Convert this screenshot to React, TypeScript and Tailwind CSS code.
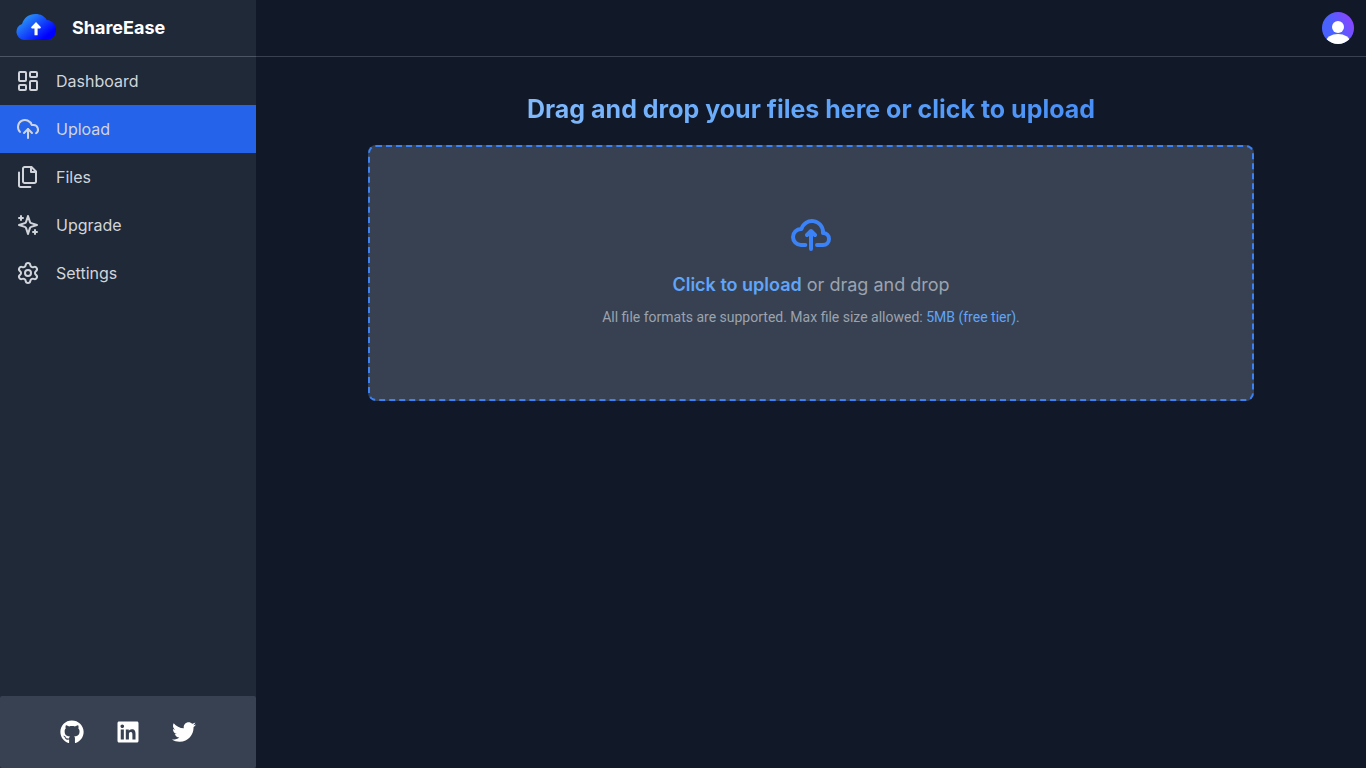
import { LayoutDashboard, Settings } from "lucide-react";
import type { ReactNode } from "react";
import { FaGithub, FaLinkedin, FaTwitter } from "react-icons/fa";

function Line({ children, className = "size-6" }: { children: ReactNode; className?: string }) {
  return (
    <svg className={className} viewBox="0 0 24 24" fill="none" stroke="currentColor" strokeWidth="2" strokeLinecap="round" strokeLinejoin="round" aria-hidden="true">
      {children}
    </svg>
  );
}

const items: { label: string; icon: ReactNode }[] = [
  { label: "Dashboard", icon: <LayoutDashboard className="size-6" aria-hidden="true" /> },
  {
    label: "Upload",
    icon: (
      <Line>
        <path d="M4 14.899A7 7 0 1 1 15.71 8h1.79a4.5 4.5 0 0 1 2.5 8.242" />
        <path d="M12 12v9" />
        <path d="m16 16-4-4-4 4" />
      </Line>
    ),
  },
  {
    label: "Files",
    icon: (
      <Line>
        <path d="M15.5 2H8.6c-.4 0-.8.2-1.1.5-.3.3-.5.7-.5 1.1v12.8c0 .4.2.8.5 1.1.3.3.7.5 1.1.5h9.8c.4 0 .8-.2 1.1-.5.3-.3.5-.7.5-1.1V6.5L15.5 2z" />
        <path d="M3 7.6v12.8c0 .4.2.8.5 1.1.3.3.7.5 1.1.5h9.8" />
        <path d="M15 2v5h5" />
      </Line>
    ),
  },
  {
    label: "Upgrade",
    icon: (
      <Line>
        <path d="m12 3-1.912 5.813a2 2 0 0 1-1.275 1.275L3 12l5.813 1.912a2 2 0 0 1 1.275 1.275L12 21l1.912-5.813a2 2 0 0 1 1.275-1.275L21 12l-5.813-1.912a2 2 0 0 1-1.275-1.275L12 3Z" />
        <path d="M5 3v4M19 17v4M3 5h4M17 19h4" />
      </Line>
    ),
  },
  { label: "Settings", icon: <Settings className="size-6" aria-hidden="true" /> },
];

function Logo() {
  return (
    <svg className="h-7 w-10" viewBox="0 0 40 28" aria-hidden="true">
      <defs>
        <linearGradient id="logo-fill" x1="8" y1="1" x2="27" y2="25" gradientUnits="userSpaceOnUse">
          <stop stopColor="#2c9cf5" />
          <stop offset="1" stopColor="#0000ff" />
        </linearGradient>
      </defs>
      <path d="M8 26A8.300 8.300 0 0 1 6 9.900C8 3.700 13 0 19.300 0C24.600 0 28.600 2.100 30.800 6C36.200 6.400 40 10.600 40 16C40 21.700 35.800 26 30.500 26Z" fill="url(#logo-fill)" />
      <path d="M20 8L25 13.200L24.200 14.400H21.600V21.200H18.500V14.400H15.800L15 13.200Z" fill="#fff" />
    </svg>
  );
}

function Avatar() {
  return (
    <svg className="size-8 rounded-full" viewBox="0 0 32 32" aria-hidden="true">
      <defs>
        <linearGradient id="avatar-fill" x1="12" y1="18" x2="30" y2="8" gradientUnits="userSpaceOnUse">
          <stop stopColor="#4962ff" />
          <stop offset="1" stopColor="#8845ff" />
        </linearGradient>
      </defs>
      <rect width="32" height="32" fill="url(#avatar-fill)" />
      <circle cx="16" cy="15" r="6" fill="#fff" />
      <ellipse cx="16" cy="30" rx="12" ry="8" fill="#fff" />
    </svg>
  );
}

export default function App() {
  return (
    <div className="flex min-h-screen bg-[#111827] font-['Inter',sans-serif]">
      <aside className="flex w-64 shrink-0 flex-col bg-[#1f2937]">
        <a href="#" className="flex h-[57px] items-center gap-4 border-b border-[#4b5563] px-4 text-lg font-bold text-white">
          <Logo />
          ShareEase
        </a>
        <nav className="flex flex-1 flex-col">
          {items.map((item) => (
            <a
              key={item.label}
              href="#"
              className={
                item.label === "Upload"
                  ? "flex h-12 items-center gap-4 bg-[#2563eb] px-4 text-[#d1d5db]"
                  : "flex h-12 items-center gap-4 px-4 text-[#d1d5db]"
              }
            >
              {item.icon}
              {item.label}
            </a>
          ))}
        </nav>
        <div className="flex h-18 items-center justify-center gap-8 rounded-xs bg-[#374151] text-white">
          <a href="#" aria-label="GitHub"><FaGithub className="size-6" /></a>
          <a href="#" aria-label="LinkedIn"><FaLinkedin className="size-6" /></a>
          <a href="#" aria-label="Twitter"><FaTwitter className="size-6" /></a>
        </div>
      </aside>
      <div className="flex min-w-0 flex-1 flex-col">
        <header className="flex h-[57px] items-center justify-end border-b border-[#374151] px-3">
          <button type="button" aria-label="Account"><Avatar /></button>
        </header>
        <main className="flex flex-col items-center px-28 pt-9">
          <h1 className="w-full bg-linear-to-r from-[#93c5fd] via-[#60a5fa] to-[#3b82f6] bg-clip-text text-center text-[25px] leading-8 font-bold text-transparent">
            Drag and drop your files here or click to upload
          </h1>
          <button type="button" className="mt-5 flex h-64 w-full flex-col items-center justify-center rounded-lg border-2 border-dashed border-[#3b82f6] bg-[#374151] text-[#9ca3af]">
            <svg className="h-8 w-10 text-[#3b82f6]" viewBox="0 0 20 16" fill="none" stroke="currentColor" strokeWidth="2" strokeLinecap="round" strokeLinejoin="round" aria-hidden="true">
              <path d="M13 13h3a3 3 0 0 0 0-6h-.025A5.56 5.56 0 0 0 16 6.5 5.5 5.5 0 0 0 5.207 5.021C5.137 5.017 5.071 5 5 5a4 4 0 0 0 0 8h2.167M10 15V6m0 0L8 8m2-2 2 2" />
            </svg>
            <span className="mt-5 text-lg">
              <strong className="font-semibold text-[#60a5fa]">Click to upload</strong> or drag and drop
            </span>
            <span className="mt-2 font-['Roboto',sans-serif] text-sm">
              All file formats are supported. Max file size allowed: <span className="text-[#60a5fa]">5MB (free tier).</span>
            </span>
          </button>
        </main>
      </div>
    </div>
  );
}
